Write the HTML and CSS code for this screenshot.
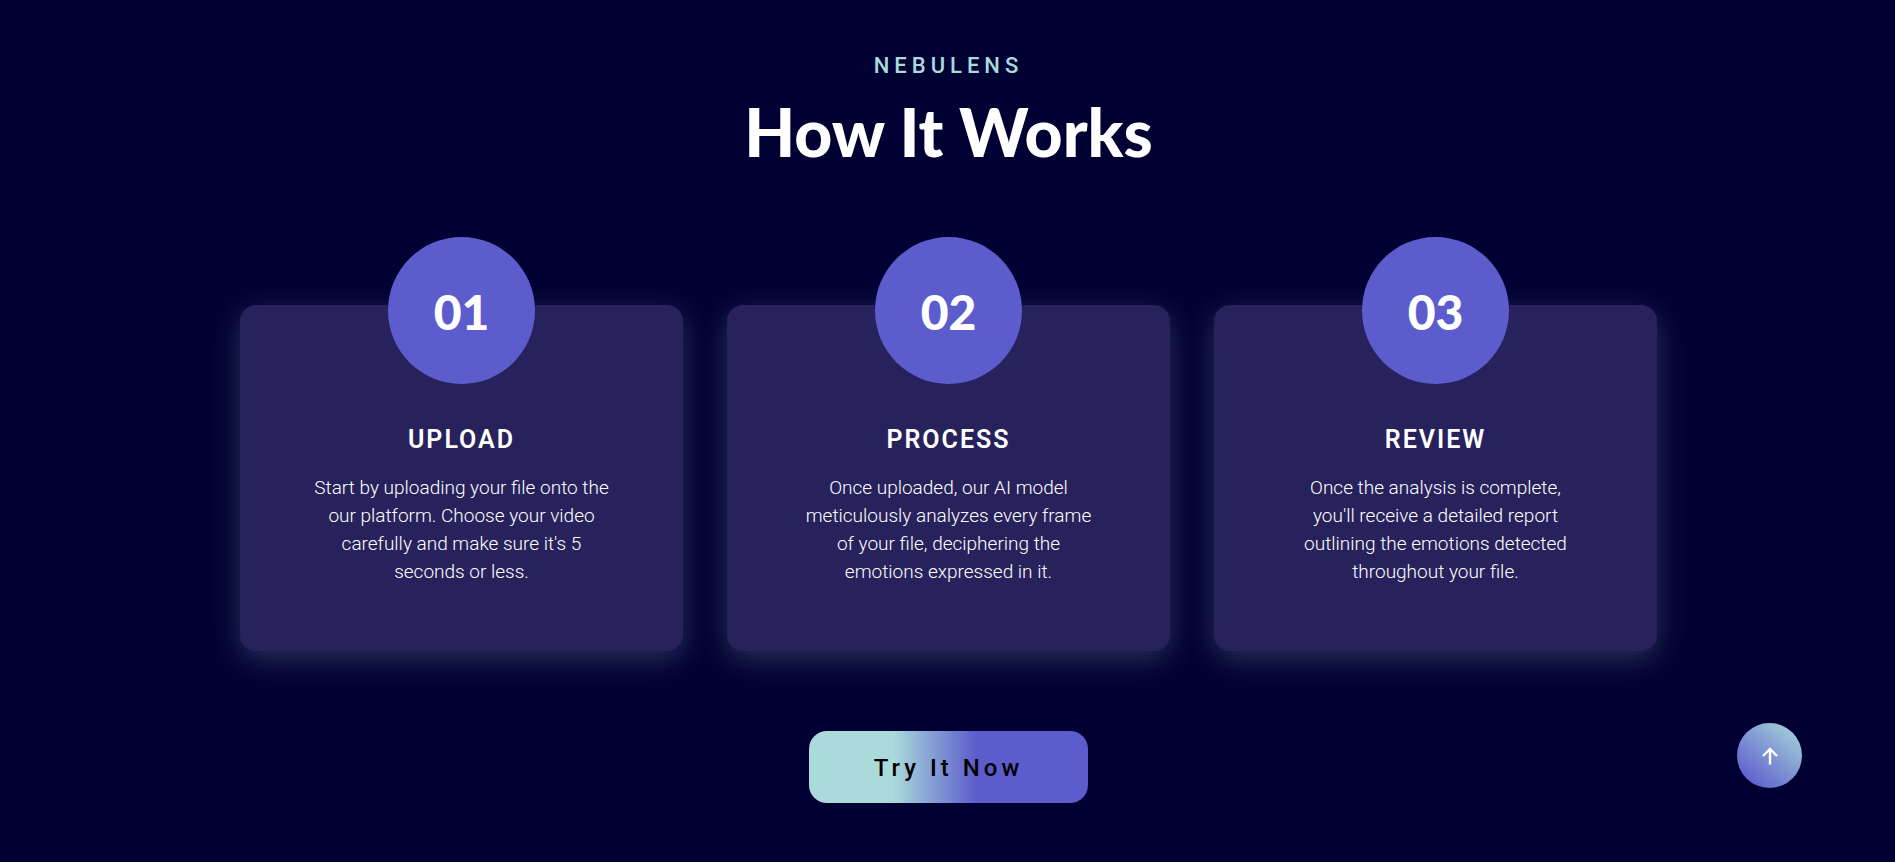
FILE: index.html
```html
<!DOCTYPE html>
<html lang="en">
<head>
<meta charset="utf-8">
<meta name="viewport" content="width=device-width, initial-scale=1">
<title>Nebulens – How It Works</title>
<link rel="stylesheet" href="styles.css">
</head>
<body>
<main class="how">
  <header class="intro">
    <p class="eyebrow">NEBULENS</p>
    <h1 class="heading">How It Works</h1>
  </header>
  <section class="steps">
    <article class="step">
      <div class="badge">01</div>
      <h2 class="step-title">UPLOAD</h2>
      <p class="step-text">Start by uploading your file onto the our platform. Choose your video carefully and make sure it's 5 seconds or less.</p>
    </article>
    <article class="step">
      <div class="badge">02</div>
      <h2 class="step-title">PROCESS</h2>
      <p class="step-text">Once uploaded, our AI model meticulously analyzes every frame of your file, deciphering the emotions expressed in it.</p>
    </article>
    <article class="step">
      <div class="badge">03</div>
      <h2 class="step-title">REVIEW</h2>
      <p class="step-text">Once the analysis is complete, you'll receive a detailed report outlining the emotions detected throughout your file.</p>
    </article>
  </section>
  <button class="cta" type="button">Try It Now</button>
</main>
<a class="to-top" href="#" aria-label="Back to top">
  <svg width="16" height="18" viewBox="0 0 16 18" fill="none" stroke="#fff" stroke-width="2.4" aria-hidden="true"><path d="M8 17.5V2M1 9l7-7 7 7"/></svg>
</a>
</body>
</html>
```
FILE: styles.css
```css
* { box-sizing: border-box; margin: 0; }

body {
  background: #000033;
  color: #fff;
  font-family: Roboto, "Liberation Sans", sans-serif;
}

.how {
  display: flex;
  flex-direction: column;
  align-items: center;
  padding: 52px 24px 58px 26px;
}

.intro { text-align: center; }

.eyebrow {
  color: #aadbda;
  font-size: 22px;
  font-weight: 500;
  line-height: 28px;
  letter-spacing: 5px;
}

.heading {
  margin-top: 12px;
  font-family: Lato, "Open Sans", sans-serif;
  font-size: 66px;
  font-weight: 900;
  line-height: 80px;
}

.steps {
  display: grid;
  grid-template-columns: repeat(auto-fit, minmax(400px, 1fr));
  gap: 44px;
  width: 100%;
  max-width: 1417px;
  margin-top: 133px;
}

.step {
  display: flex;
  flex-direction: column;
  align-items: center;
  padding: 0 73px 65px;
  border-radius: 16px;
  background: #28225c;
  box-shadow: 0 8px 30px rgba(180, 205, 200, 0.24);
  text-align: center;
}

.badge {
  display: grid;
  place-items: center;
  width: 147px;
  height: 147px;
  margin-top: -68px;
  padding-top: 2px;
  border-radius: 50%;
  background: #5d5ccd;
  font-family: Lato, "Open Sans", sans-serif;
  font-size: 48px;
  font-weight: 900;
}

.step-title {
  margin-top: 40px;
  font-size: 25px;
  font-weight: 600;
  line-height: 32px;
  letter-spacing: 2px;
}

.step-text {
  margin-top: 18px;
  font-size: 19px;
  font-weight: 300;
  line-height: 28px;
}

.cta {
  margin-top: 80px;
  padding: 21px 65px 19px;
  border: 0;
  border-radius: 18px;
  background: linear-gradient(90deg, #aadbda 30%, #5d5ccd 60%);
  color: #000;
  font: 500 24px/32px Roboto, "Liberation Sans", sans-serif;
  letter-spacing: 4px;
  cursor: pointer;
}

.to-top {
  position: fixed;
  right: 93px;
  bottom: 74px;
  display: grid;
  place-items: center;
  width: 65px;
  height: 65px;
  border-radius: 50%;
  background: linear-gradient(40deg, #5d5ccd 10%, #aadbda);
}
```
